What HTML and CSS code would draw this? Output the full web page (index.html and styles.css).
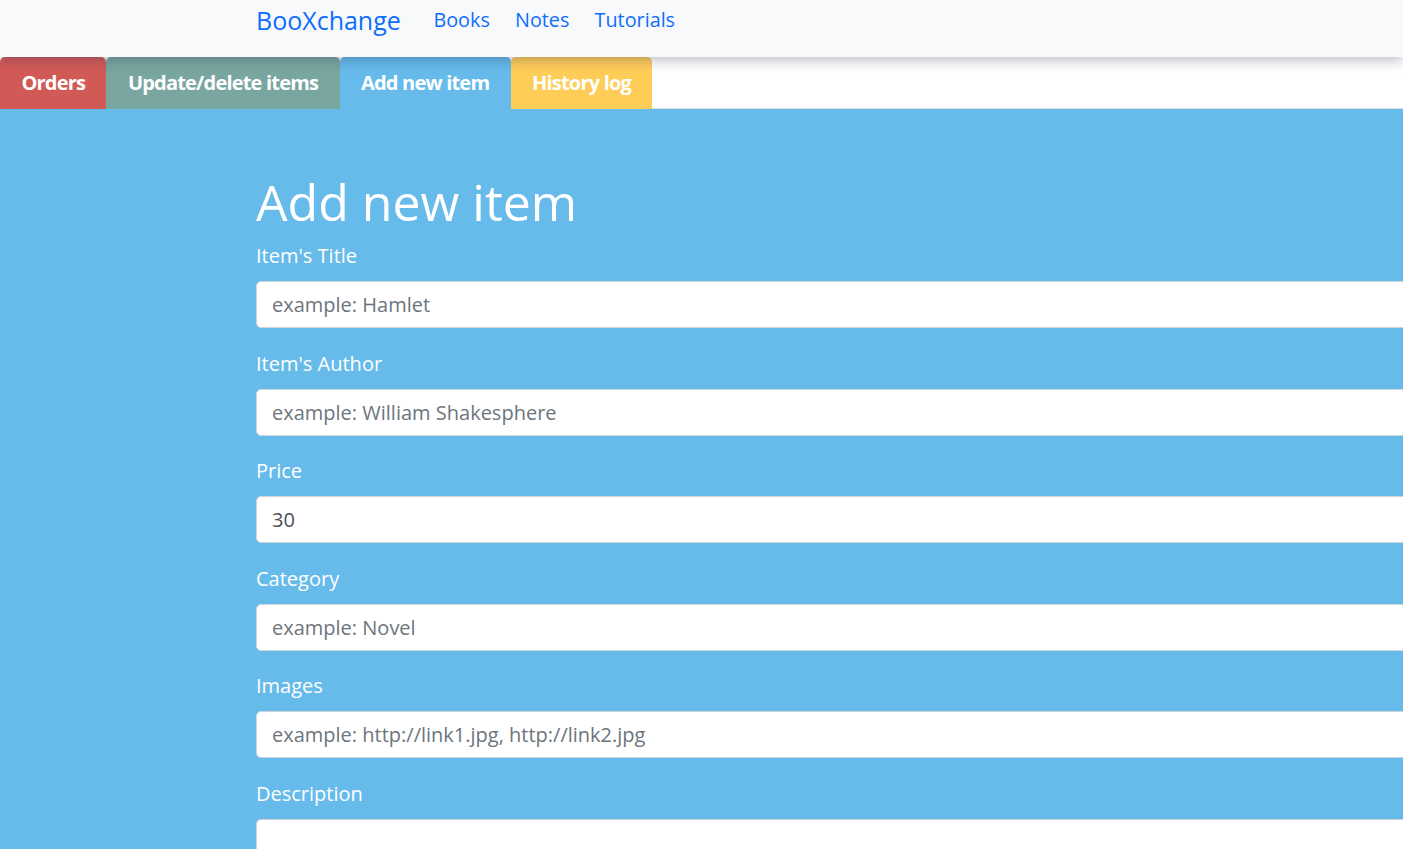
FILE: index.html
```html
<!DOCTYPE html>
<html lang="en">
<head>
<meta charset="utf-8">
<title>BooXchange - Add new item</title>
<link rel="stylesheet" href="styles.css">
</head>
<body>
<nav class="navbar">
  <a class="brand" href="#">BooXchange</a>
  <ul class="nav-links">
    <li><a href="#">Books</a></li>
    <li><a href="#">Notes</a></li>
    <li><a href="#">Tutorials</a></li>
  </ul>
</nav>
<div class="tabs">
  <a class="tab tab-orders" href="#">Orders</a>
  <a class="tab tab-update" href="#">Update/delete items</a>
  <a class="tab tab-add" href="#">Add new item</a>
  <a class="tab tab-history" href="#">History log</a>
</div>
<main class="content">
  <form class="form">
    <h1 class="title">Add new item</h1>
    <div class="group">
      <label class="label" for="title">Item's Title</label>
      <input class="input" id="title" type="text" placeholder="example: Hamlet">
    </div>
    <div class="group">
      <label class="label" for="author">Item's Author</label>
      <input class="input" id="author" type="text" placeholder="example: William Shakesphere">
    </div>
    <div class="group">
      <label class="label" for="price">Price</label>
      <input class="input" id="price" type="text" value="30">
    </div>
    <div class="group">
      <label class="label" for="category">Category</label>
      <input class="input" id="category" type="text" placeholder="example: Novel">
    </div>
    <div class="group">
      <label class="label" for="images">Images</label>
      <input class="input" id="images" type="text" placeholder="example: http://link1.jpg, http://link2.jpg">
    </div>
    <div class="group">
      <label class="label" for="desc">Description</label>
      <textarea class="input textarea" id="desc"></textarea>
    </div>
  </form>
</main>
</body>
</html>
```
FILE: styles.css
```css
* { box-sizing: border-box; }
html, body {
  margin: 0;
  padding: 0;
  height: 100%;
  overflow: hidden;
}
body {
  font-family: "Open Sans", "Noto Sans", sans-serif;
  font-size: 20px;
  line-height: 1.5;
  color: #212529;
  background: #ffffff;
}
a { text-decoration: none; }

.navbar {
  position: relative;
  z-index: 2;
  height: 57px;
  background: #f8f9fa;
  display: flex;
  align-items: flex-start;
  padding-left: 256px;
  box-shadow: 0 3px 12px rgba(40, 40, 80, 0.32);
}
.brand {
  font-size: 25px;
  line-height: 36px;
  margin-top: 2px;
  color: #0d6efd;
  margin-right: 20px;
}
.nav-links {
  list-style: none;
  display: flex;
  margin: 0;
  padding: 0;
}
.nav-links a {
  display: block;
  padding: 5px 12.6px 0;
  line-height: 30px;
  font-size: 19.8px;
  color: #0d6efd;
}

.tabs {
  position: relative;
  z-index: 1;
  display: flex;
  height: 52px;
  background: #fff;
  border-bottom: 1px solid #dcdfe3;
}
.tab {
  display: flex;
  align-items: center;
  height: 52px;
  margin-bottom: -1px;
  padding: 0 21.4px 1px 21.4px;
  color: #fff;
  font-weight: 700;
  font-size: 20px;
  letter-spacing: -0.8px;
  border-radius: 5px 5px 0 0;
}
.tab-orders { background: #d25a56; }
.tab-update { background: #79a6a0; }
.tab-add { background: #66bbea; }
.tab-history { background: #fecd58; }

.content {
  background: #66bbea;
  padding: 63px 0 0 256px;
  height: calc(100% - 109px);
  overflow: hidden;
}
.form {
  width: 1320px;
}
.title {
  margin: 0 0 9px;
  font-weight: 400;
  font-size: 50px;
  line-height: 1.2;
  color: #fff;
}
.group {
  margin-bottom: 20.6px;
}
.label {
  display: block;
  color: #fff;
  margin-bottom: 10px;
}
.input {
  display: block;
  width: 100%;
  height: 47px;
  padding: 0 15px;
  font-family: inherit;
  font-size: 20px;
  color: #495057;
  background: #fff;
  border: 1px solid #ced4da;
  border-radius: 5px;
  outline: none;
}
.input::placeholder { color: #6c757d; opacity: 1; }
.textarea {
  height: 120px;
  resize: none;
}
```
